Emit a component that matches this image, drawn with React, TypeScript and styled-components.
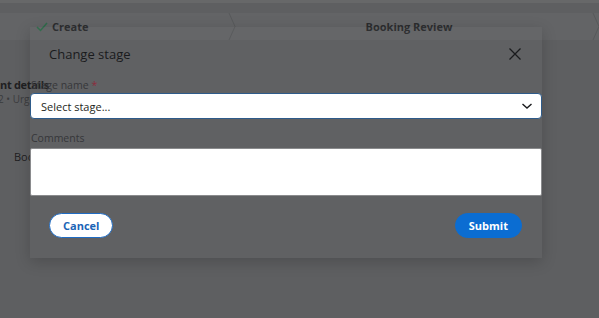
import React from 'react';
import styled, { createGlobalStyle } from 'styled-components';

const GlobalStyle = createGlobalStyle`
    html, body { margin: 0; padding: 0; }
    body {
        font-family: "Open Sans", "Liberation Sans", sans-serif;
        background: #5e5f61;
    }
`;

const Page = styled.div`
    position: relative;
    width: 599px;
    height: 318px;
    overflow: hidden;
    background: #5e5f61;
`;

const TopStrip = styled.div`
    height: 3px;
    background: #676869;
`;

const StageBar = styled.div`
    margin-top: 10px;
    height: 27px;
    display: flex;
    background: #636466;
`;

const Stage = styled.div<{ $width: number; $center?: boolean }>`
    position: relative;
    width: ${({ $width }) => $width}px;
    display: flex;
    align-items: center;
    justify-content: ${({ $center }) => ($center ? 'center' : 'flex-start')};
    padding-left: ${({ $center }) => ($center ? '0' : '36px')};
    box-sizing: border-box;
    font-size: 11px;
    font-weight: 700;
    color: #2b2c2e;
    gap: 4px;

    svg.chev {
        position: absolute;
        right: -4px;
        top: 0;
    }
`;

const Details = styled.div`
    padding-top: 38px;
    display: flex;
    flex-direction: column;
`;

const DetailTitle = styled.div`
    font-size: 11px;
    font-weight: 700;
    color: #1f2022;
    line-height: 14px;
    letter-spacing: -0.3px;
`;

const DetailMeta = styled.div`
    font-size: 10px;
    color: #3a3b3d;
    line-height: 14px;
    margin-left: -2px;
`;

const DetailItem = styled.div`
    margin-top: 43px;
    margin-left: 14px;
    font-size: 11px;
    color: #1f2022;
`;

const Dialog = styled.div`
    position: absolute;
    left: 30px;
    top: 27px;
    width: 512px;
    height: 231px;
    background: rgba(255, 255, 255, 0.015);
    box-shadow: 0 4px 14px rgba(0, 0, 0, 0.18);
    display: flex;
    flex-direction: column;
`;

const Header = styled.div`
    height: 52px;
    flex-shrink: 0;
    padding: 2px 20px 0 19px;
    box-sizing: border-box;
    display: flex;
    align-items: center;
    justify-content: space-between;
`;

const Title = styled.div`
    font-size: 13px;
    color: #1a1b1d;
`;

const CloseButton = styled.button`
    border: none;
    background: none;
    padding: 0;
    width: 14px;
    height: 14px;
    display: flex;
    align-items: center;
    justify-content: center;
    cursor: pointer;
`;

const Field = styled.div<{ $gap?: number }>`
    display: flex;
    flex-direction: column;
    flex-shrink: 0;
    margin-top: ${({ $gap }) => $gap ?? 0}px;
`;

const Label = styled.div<{ $space: number }>`
    font-size: 10.5px;
    line-height: 12px;
    color: #36373a;
    padding-left: 1px;
    margin-bottom: ${({ $space }) => $space}px;

    span { color: #8c2c3c; margin-left: 3px; }
`;

const SelectBox = styled.div`
    height: 26px;
    box-sizing: border-box;
    background: #fff;
    border: 1px solid #2e5b8a;
    border-radius: 4px;
    display: flex;
    align-items: center;
    justify-content: space-between;
    padding: 0 8px 0 10px;
    font-size: 11px;
    color: #1e1f21;
`;

const TextArea = styled.div`
    height: 48px;
    box-sizing: border-box;
    background: #fff;
    border: 1px solid #8a8b8d;
    border-radius: 2px;
`;

const Footer = styled.div`
    margin-top: 17px;
    padding: 0 20px 0 19px;
    display: flex;
    align-items: center;
    justify-content: space-between;
`;

const Pill = styled.button<{ $primary?: boolean }>`
    height: 25px;
    padding: 0 13px;
    border-radius: 999px;
    font-family: "Open Sans", "Liberation Sans", sans-serif;
    font-size: 11px;
    font-weight: 700;
    cursor: pointer;
    border: 1px solid ${({ $primary }) => ($primary ? '#0b6dd2' : '#1f6cc4')};
    background: ${({ $primary }) => ($primary ? '#0b6dd2' : '#ffffff')};
    color: ${({ $primary }) => ($primary ? '#ffffff' : '#1b64b6')};
`;

const Chevron = () => (
    <svg className="chev" width="8" height="27" viewBox="0 0 8 27">
        <path d="M1 0 L7 13.5 L1 27" fill="none" stroke="#58595b" strokeWidth="1" />
    </svg>
);

export default function App() {
    return (
        <>
            <GlobalStyle />
            <Page>
                <TopStrip />
                <StageBar>
                    <Stage $width={232}>
                        <svg width="12" height="10" viewBox="0 0 12 10">
                            <path d="M1 5 L4.5 8.5 L11 1" fill="none" stroke="#2f6b4b" strokeWidth="1.5" />
                        </svg>
                        Create
                        <Chevron />
                    </Stage>
                    <Stage $width={364} $center>
                        <span style={{ marginLeft: -10 }}>Booking Review</span>
                        <Chevron />
                    </Stage>
                </StageBar>
                <Details>
                    <DetailTitle>nt details</DetailTitle>
                    <DetailMeta>2 • Urgent</DetailMeta>
                    <DetailItem>Booking</DetailItem>
                </Details>

                <Dialog>
                    <Header>
                        <Title>Change stage</Title>
                        <CloseButton aria-label="Close">
                            <svg width="12" height="12" viewBox="0 0 12 12">
                                <path d="M0.5 0.5 L11.5 11.5 M11.5 0.5 L0.5 11.5" stroke="#1a1b1d" strokeWidth="1.3" />
                            </svg>
                        </CloseButton>
                    </Header>
                    <Field>
                        <Label $space={2}>Stage name<span>*</span></Label>
                        <SelectBox>
                            Select stage...
                            <svg width="12" height="8" viewBox="0 0 12 8">
                                <path d="M1.5 2 L6 6 L10.5 2" fill="none" stroke="#1a1b1d" strokeWidth="1.4" />
                            </svg>
                        </SelectBox>
                    </Field>
                    <Field $gap={13}>
                        <Label $space={4}>Comments</Label>
                        <TextArea />
                    </Field>
                    <Footer>
                        <Pill>Cancel</Pill>
                        <Pill $primary>Submit</Pill>
                    </Footer>
                </Dialog>
            </Page>
        </>
    );
}
